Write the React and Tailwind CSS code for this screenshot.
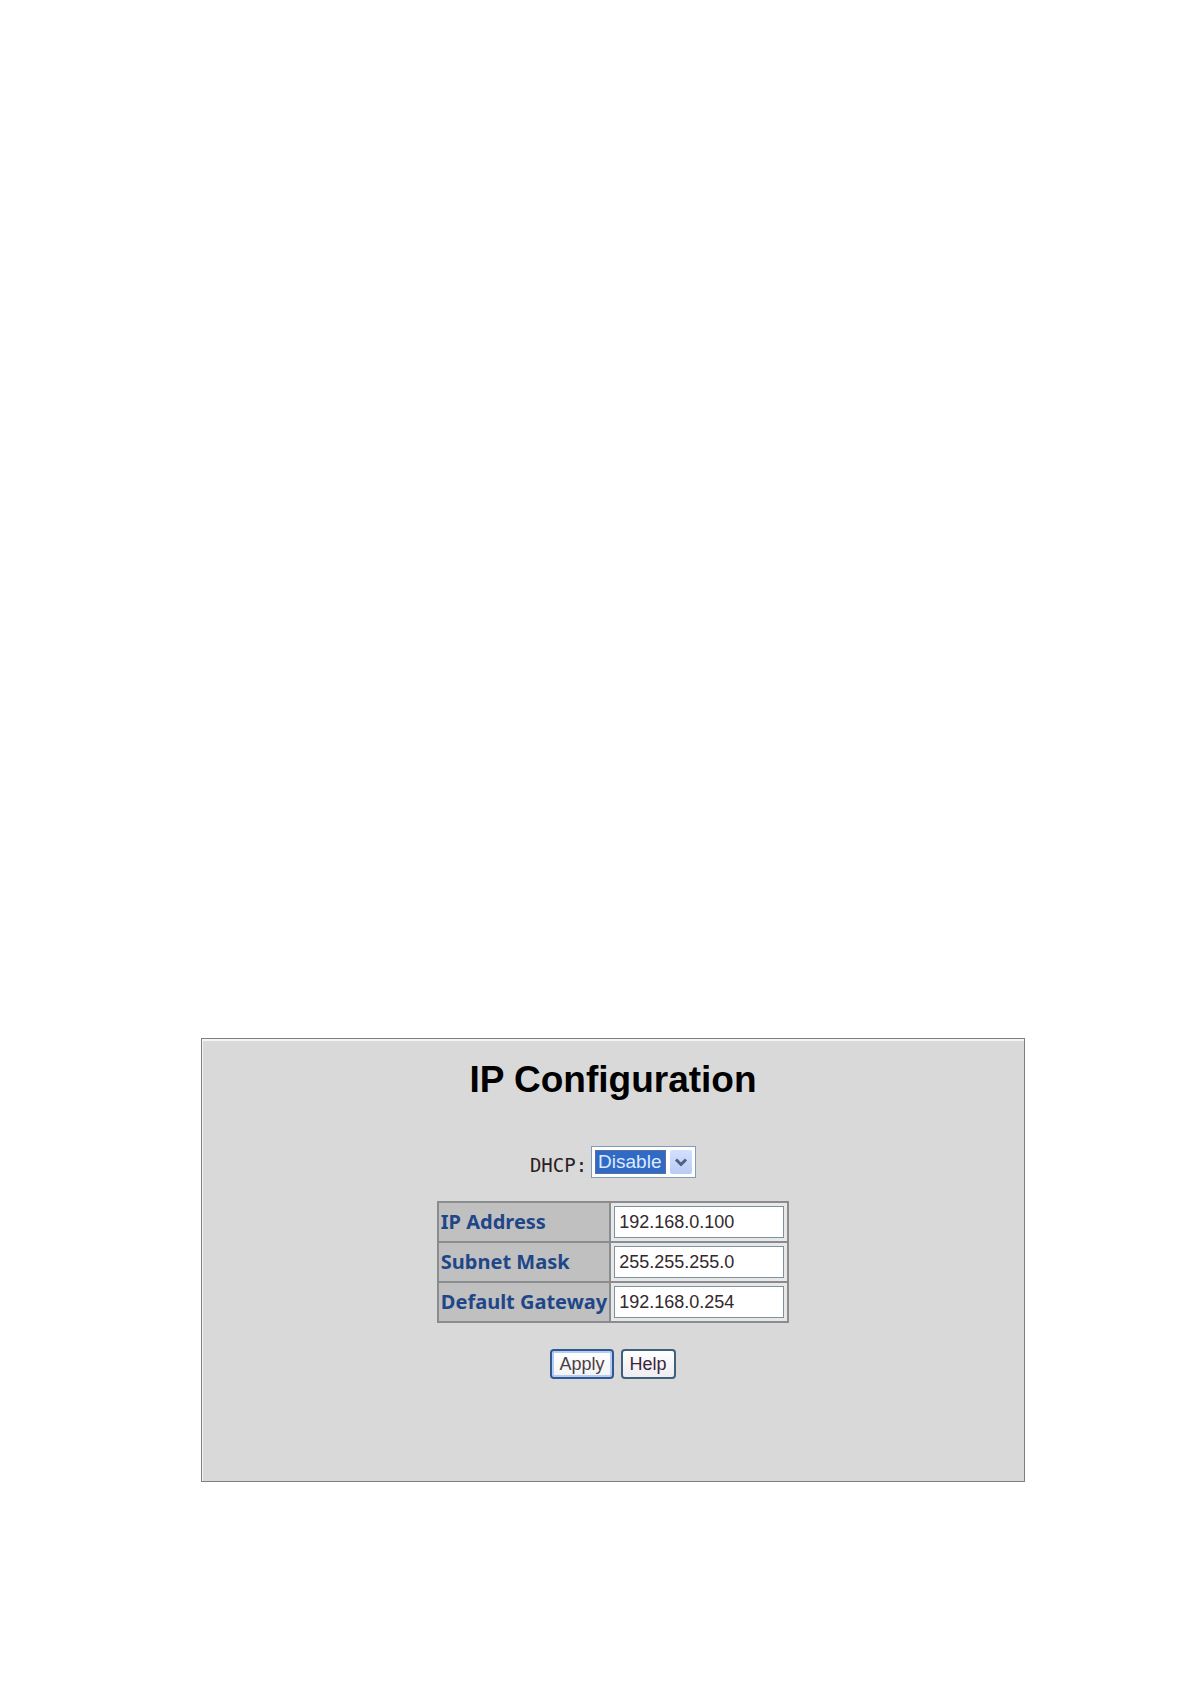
import { useState } from "react";

const FIELDS = [
  { id: "ip-address", label: "IP Address", value: "192.168.0.100" },
  { id: "subnet-mask", label: "Subnet Mask", value: "255.255.255.0" },
  { id: "default-gateway", label: "Default Gateway", value: "192.168.0.254" }
];

const App = () => {
  const [dhcp, setDhcp] = useState("Disable");
  const [values, setValues] = useState(
    Object.fromEntries(FIELDS.map(f => [f.id, f.value]))
  );

  return (
    <main className="bg-white pt-[1038px] pb-[202px] pl-[201px] pr-[165px] font-['Liberation_Sans',sans-serif]">
      <form
        onSubmit={(e) => e.preventDefault()}
        className="flex flex-col items-center border border-[#7f7f7f] bg-[#d9d9d9] pt-5 pb-[102px] shadow-[inset_1px_2px_0_#f4f4f4]"
      >
        <h1 className="text-[37px] leading-[42px] font-bold text-black">
          IP Configuration
        </h1>

        {/* DHCP */}
        <div className="mt-[45px] flex items-center gap-1">
          <label
            htmlFor="dhcp"
            className="pt-1.5 font-['DejaVu_Sans_Mono',monospace] text-[19px] leading-6 text-[#2b2024]"
          >
            DHCP:
          </label>
          <div className="flex items-stretch gap-1 border border-[#7f9db9] bg-white p-[3px]">
            <select
              id="dhcp"
              value={dhcp}
              onChange={(e) => setDhcp(e.target.value)}
              className="w-[71px] appearance-none border border-[#5b6f9c] bg-[#316ac5] px-[2px] text-[19px] leading-[22px] text-[#dcebff] outline-none"
            >
              <option>Disable</option>
              <option>Enable</option>
            </select>
            <span className="pointer-events-none flex w-[22px] items-center justify-center rounded-xs bg-linear-to-b from-[#d3dffc] to-[#b9cbf5]">
              <svg width="14" height="9" viewBox="0 0 14 9" fill="none">
                <path d="M2 1.5 L7 6.5 L12 1.5" stroke="#4d6185" strokeWidth="3" />
              </svg>
            </span>
          </div>
        </div>

        {/* ADDRESSES */}
        <table className="mt-[23px] border-collapse border-2 border-[#8a8c8e]">
          <tbody>
            {FIELDS.map(f => (
              <tr key={f.id}>
                <th
                  scope="row"
                  className="border-2 border-[#8a8c8e] bg-[#c0c0c0] px-[2px] text-left font-['Noto_Sans',sans-serif] text-[20px] leading-6 font-bold whitespace-nowrap text-[#1f4788]"
                >
                  <label htmlFor={f.id}>{f.label}</label>
                </th>
                <td className="border-2 border-[#8a8c8e] bg-[#e6e8ea] p-[3px]">
                  <input
                    id={f.id}
                    type="text"
                    value={values[f.id]}
                    onChange={(e) => setValues({ ...values, [f.id]: e.target.value })}
                    className="block h-8 w-[170px] border border-[#7f9099] bg-white px-1 text-[18px] leading-6 text-[#33282c] outline-none"
                  />
                </td>
              </tr>
            ))}
          </tbody>
        </table>

        {/* ACTIONS */}
        <div className="mt-[26px] flex gap-[7px]">
          <button
            type="submit"
            className="rounded-[4px] border-2 border-[#2f5792] bg-linear-to-b from-white to-[#f2f2f4] px-[7px] text-[18px] leading-[26px] text-[#4a3f46] shadow-[inset_0_0_0_2px_#b4ccf2]"
          >
            Apply
          </button>
          <button
            type="button"
            className="rounded-[4px] border-2 border-[#3f5f7c] bg-linear-to-b from-white to-[#ececf2] px-[7px] text-[18px] leading-[26px] text-[#3a2438]"
          >
            Help
          </button>
        </div>
      </form>
    </main>
  );
};

export default App;
